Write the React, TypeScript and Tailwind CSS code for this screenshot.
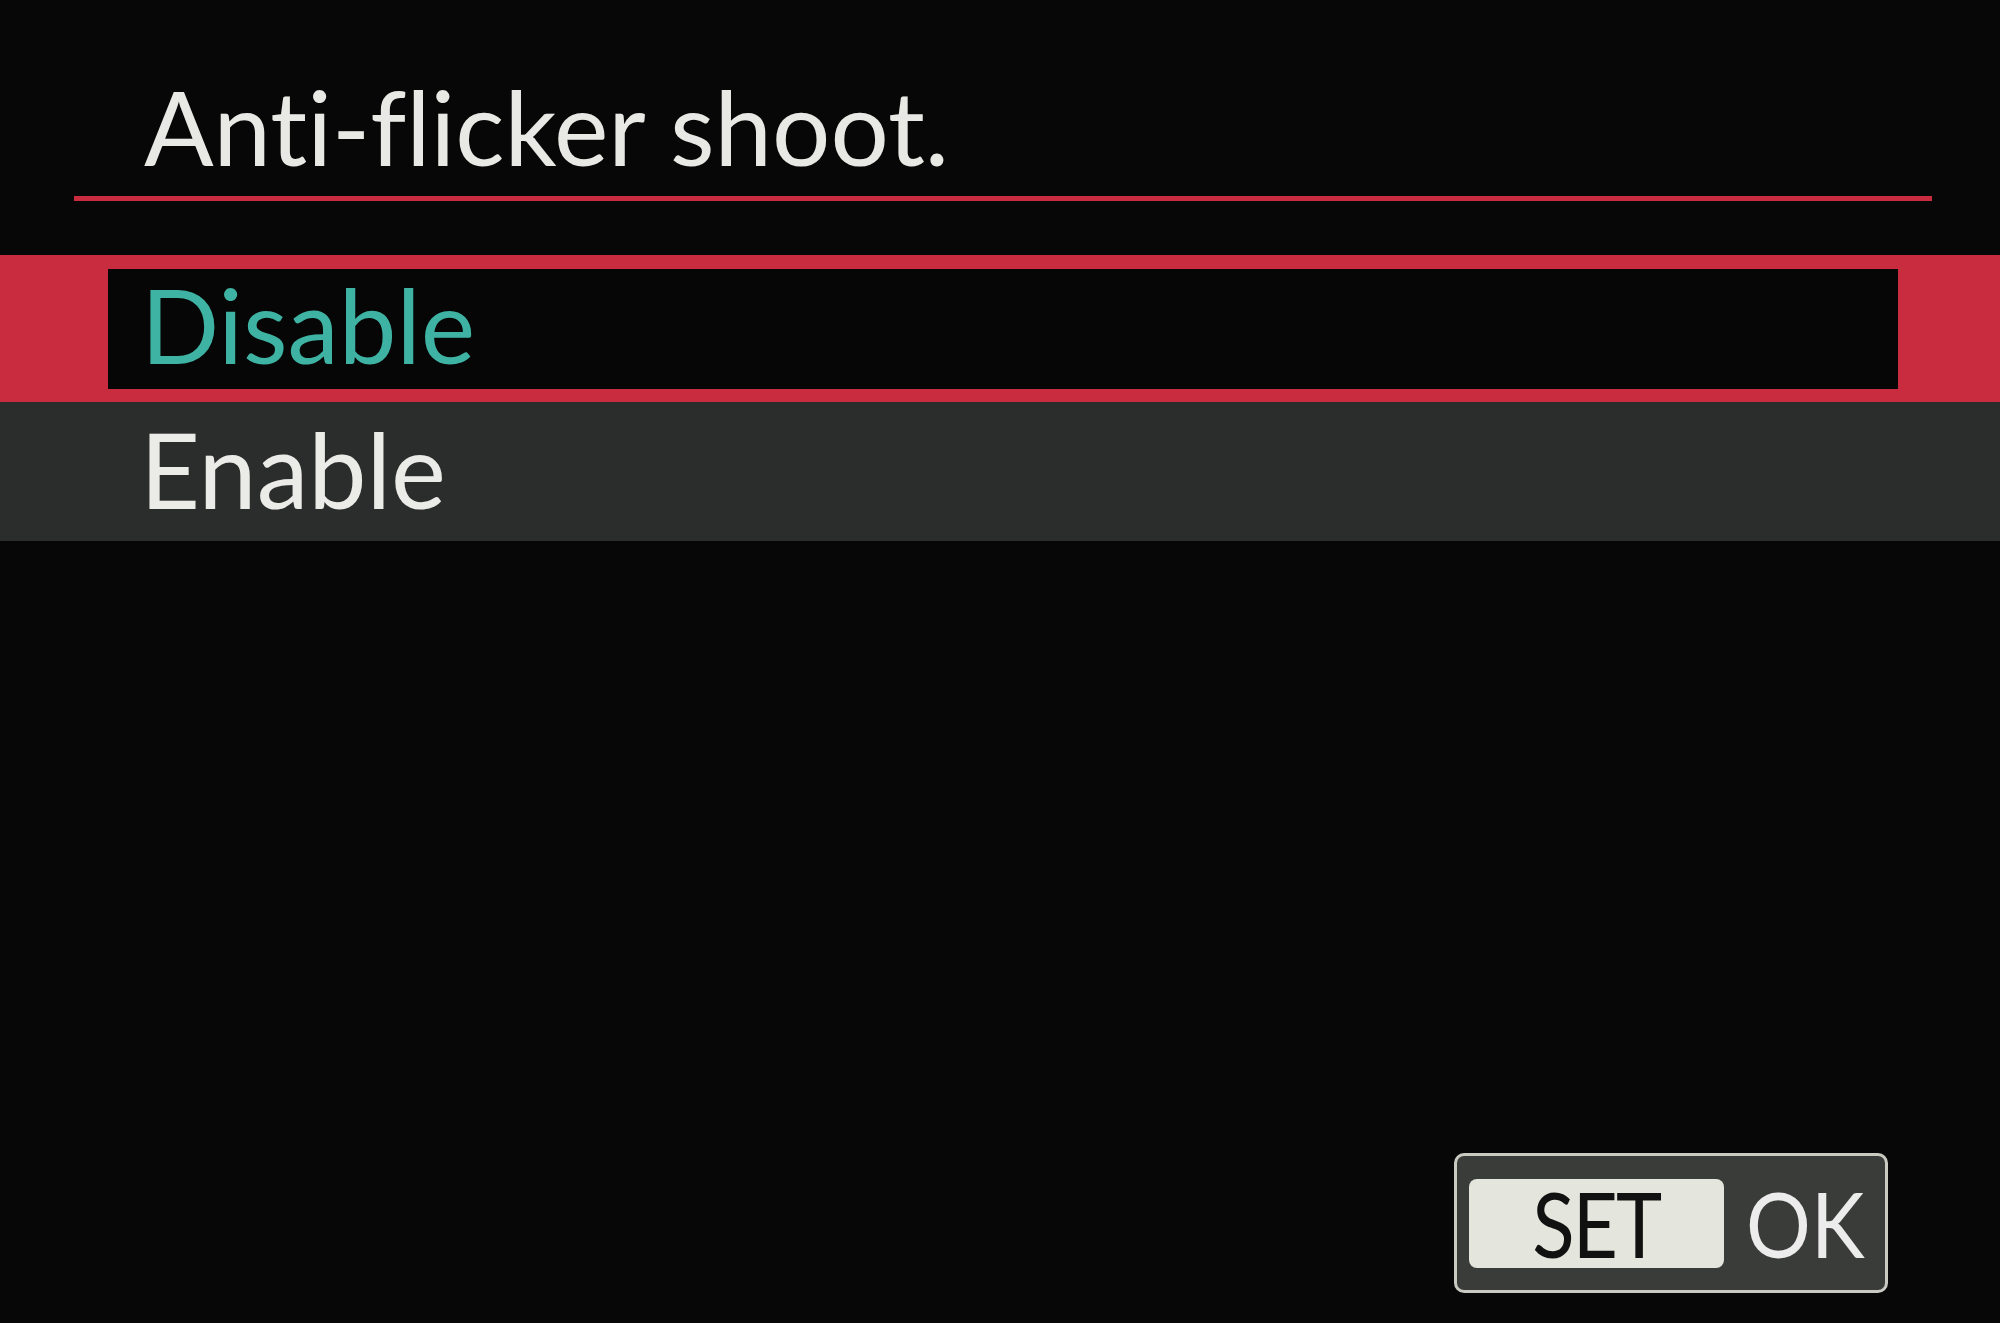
type Option = { label: string; selected: boolean };

const OPTIONS: Option[] = [
  { label: "Disable", selected: true },
  { label: "Enable", selected: false },
];

function OptionRow({ option }: { option: Option }) {
  if (option.selected) {
    return (
      <div className="h-[147px] bg-[#c92b3f] pt-[14px] pb-[13px] pl-[108px] pr-[102px]">
        <div className="h-full bg-[#060606] pt-[4px] pl-[33px]">
          <span className="block text-[103px] leading-none text-[#3fb3a3]">{option.label}</span>
        </div>
      </div>
    );
  }
  return (
    <div className="h-[139px] bg-[#2a2d2b] pt-[15px] pl-[140px]">
      <span className="block text-[104px] leading-none text-[#ebebe7]">{option.label}</span>
    </div>
  );
}

export default function App() {
  return (
    <div className="w-[2000px] h-[1323px] bg-[#070707] overflow-hidden flex flex-col font-['Lato',sans-serif] [font-variant-ligatures:none]">
      {/* Menu title */}
      <div className="pt-[75px] pl-[144px]">
        <h1 className="text-[103px] leading-none font-normal text-[#e8e8e4]">Anti-flicker shoot.</h1>
      </div>
      <div className="mt-[18px] ml-[74px] w-[1858px] h-[5px] bg-[#c92b3f]" />

      {/* Options */}
      <div className="mt-[54px] flex flex-col">
        {OPTIONS.map(o => (
          <OptionRow key={o.label} option={o} />
        ))}
      </div>

      <div className="flex-1" />

      {/* SET OK hint */}
      <div className="flex justify-end pr-[112px] pb-[30px]">
        <div className="w-[434px] h-[140px] rounded-[10px] border-[3px] border-[#c9cbc2] bg-[#3a3c39] flex items-center pl-[12px] gap-[20px]">
          <div className="w-[255px] h-[89px] rounded-[8px] bg-[#e4e5dc] flex items-center justify-center">
            <span className="inline-block text-[92px] leading-none text-[#111] scale-x-[0.85] tracking-tight">SET</span>
          </div>
          <span className="inline-block text-[92px] leading-none text-[#ececec] scale-x-[0.88] -ml-[6px]">OK</span>
        </div>
      </div>
    </div>
  );
}
